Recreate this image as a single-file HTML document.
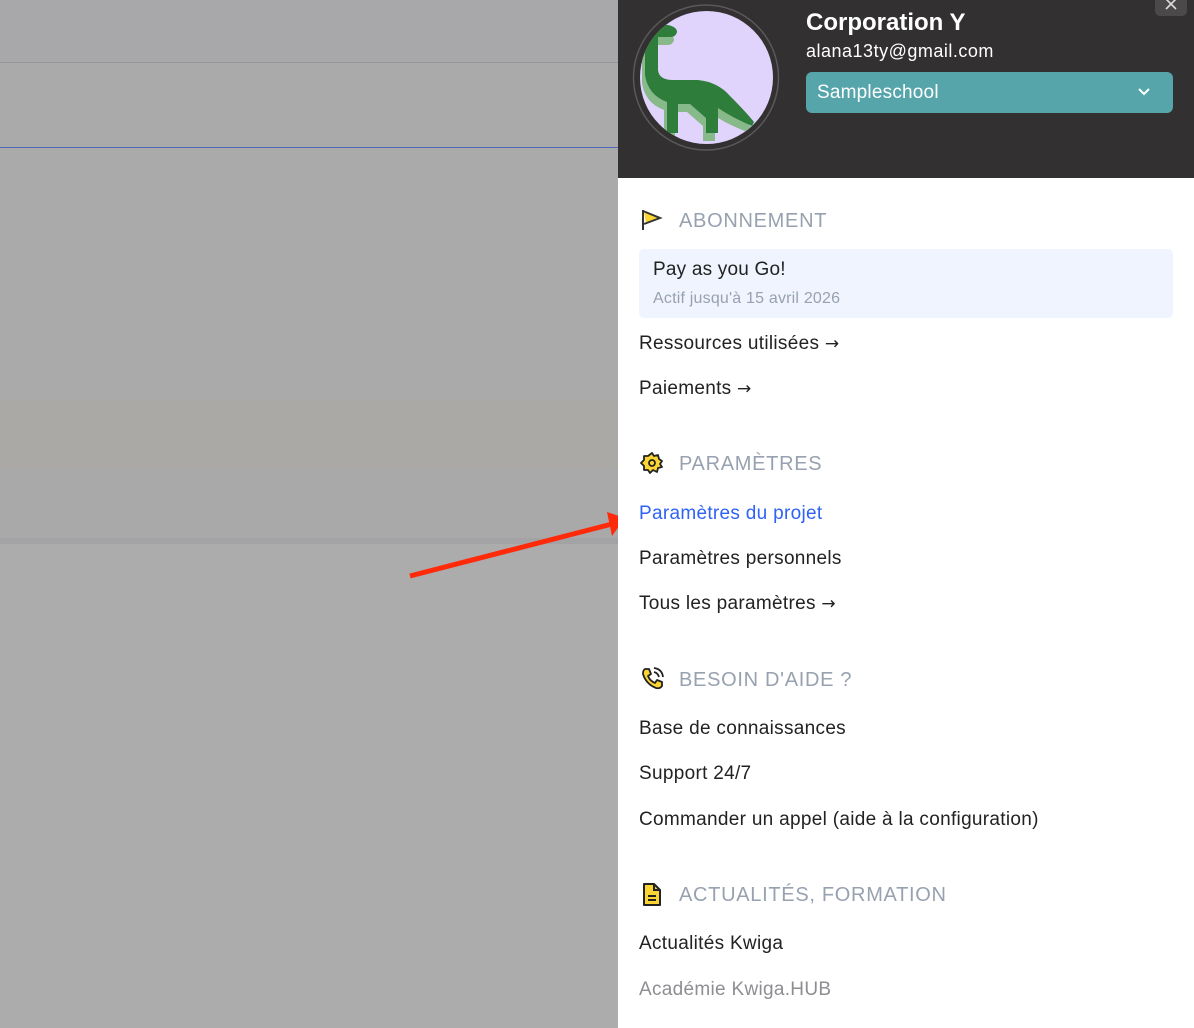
<!DOCTYPE html>
<html><head><meta charset="utf-8"><style>
*{margin:0;padding:0;box-sizing:border-box}
body{width:1194px;height:1028px;overflow:hidden;background:#aaa;font-family:"Liberation Sans",sans-serif;position:relative}
.abs{position:absolute}
.panel{left:618px;top:0;width:576px;height:1028px;background:#fff}
.hdr{left:0;top:0;width:576px;height:178px;background:#323031}
.t{position:absolute;left:21px;font-size:19px;letter-spacing:.3px;color:#222;white-space:nowrap;margin-top:2px}
.h{position:absolute;left:61px;font-size:20px;color:#98a1b0;letter-spacing:.7px;white-space:nowrap;margin-top:2px}
.ic{position:absolute;left:22px}
.ar{font-family:"DejaVu Sans",sans-serif;font-size:17px}
</style></head><body>
<div class="abs" style="left:0;top:0;width:618px;height:62px;background:#a8a8aa"></div>
<div class="abs" style="left:0;top:62px;width:618px;height:1px;background:#959599"></div>
<div class="abs" style="left:0;top:147px;width:618px;height:1px;background:#5068b8"></div>
<div class="abs" style="left:0;top:400px;width:618px;height:68px;background:#aaa9a5"></div>
<div class="abs" style="left:0;top:468px;width:618px;height:70px;background:#a9a9a9"></div>
<div class="abs" style="left:0;top:538px;width:618px;height:6px;background:#a3a3a5"></div>
<div class="abs" style="left:0;top:544px;width:618px;height:484px;background:#acacac"></div>
<svg class="abs" style="left:0;top:0" width="640" height="600"><line x1="410" y1="576" x2="612" y2="524" stroke="#ff2a0a" stroke-width="5"/><polygon points="625,518 607,512 612,536" fill="#ff2a0a"/></svg>
<div class="abs panel">
<div class="abs hdr">
<svg class="abs" style="left:0;top:0" width="180" height="178">
<defs><clipPath id="c"><circle cx="88.5" cy="77.5" r="66.5"/></clipPath></defs>
<circle cx="88" cy="77.5" r="72.5" fill="none" stroke="#5a585a" stroke-width="1.5"/>
<circle cx="88.5" cy="77.5" r="66.5" fill="#e0d4fc"/>
<g clip-path="url(#c)">
<path transform="translate(-3,8)" d="M32 25 L50 25 Q59 27 59 32 Q58 37 52 37 L40 37 L40 70 Q41 80 55 80 L80 80 Q100 82 112 96 Q128 112 140 122 L138 126 Q115 118 100 108 L100 133 L88 133 L88 118 L72 104 L60 104 L60 133 L49 133 L49 102 Q30 95 27 75 L27 35 Q28 25 32 25Z" fill="#87b98a"/>
<path d="M32 25 L50 25 Q59 27 59 32 Q58 37 52 37 L40 37 L40 70 Q41 80 55 80 L80 80 Q100 82 112 96 Q128 112 136 122 L134 126 Q115 118 100 108 L100 133 L88 133 L88 118 L72 104 L60 104 L60 133 L49 133 L49 102 Q30 95 27 75 L27 35 Q28 25 32 25Z" fill="#2e7d3b"/>
</g></svg>
<div class="abs" style="left:188px;top:9px;font-size:24px;font-weight:bold;color:#fff">Corporation Y</div>
<div class="abs" style="left:188px;top:41px;font-size:18px;letter-spacing:.5px;color:#fff">alana13ty@gmail.com</div>
<div class="abs" style="left:188px;top:72px;width:367px;height:41px;background:#55a5aa;border-radius:6px">
<div class="abs" style="left:11px;top:10px;font-size:19px;letter-spacing:.2px;color:#fff">Sampleschool</div>
<svg class="abs" style="left:330px;top:12px" width="16" height="16"><path d="M3 5 L8 10 L13 5" fill="none" stroke="#fff" stroke-width="2"/></svg>
</div>
<div class="abs" style="left:537px;top:-6px;width:32px;height:22px;background:#4b494a;border-radius:5px">
<svg class="abs" style="left:10px;top:5px" width="14" height="12"><path d="M1 0 L11 10 M11 0 L1 10" stroke="#ddd" stroke-width="1.6"/></svg></div>
</div>
<svg class="ic" style="top:207px" width="24" height="24"><path d="M4 4 L20 11 L6 17Z" fill="#fcd535"/><path d="M3 3 L3 23 M3 4 L20 11 L4 17" fill="none" stroke="#333" stroke-width="2"/></svg>
<div class="h" style="top:208px">ABONNEMENT</div>
<div class="abs" style="left:21px;top:249px;width:534px;height:69px;background:#eff4fe;border-radius:5px">
<div class="abs" style="left:14px;top:10px;font-size:19px;letter-spacing:.2px;color:#222">Pay as you Go!</div>
<div class="abs" style="left:14px;top:41px;font-size:16px;letter-spacing:.2px;color:#98a1b0">Actif jusqu'à 15 avril 2026</div></div>
<div class="t" style="top:331px">Ressources utilisées <span class="ar">→</span></div>
<div class="t" style="top:376px">Paiements <span class="ar">→</span></div>
<svg class="ic" style="top:451px" width="24" height="24"><path d="M12 2 L14 5 L18 4 L19 8 L22 10 L20 13 L22 16 L18 17 L17 21 L13 19 L10 22 L8 19 L4 19 L4 15 L1 12 L4 9 L4 5 L8 5Z" fill="#fcd535" stroke="#222" stroke-width="1.8" stroke-linejoin="round"/><circle cx="12" cy="12" r="3" fill="none" stroke="#222" stroke-width="1.8"/></svg>
<div class="h" style="top:451px">PARAMÈTRES</div>
<div class="t" style="top:501px;color:#2f62f5">Paramètres du projet</div>
<div class="t" style="top:546px">Paramètres personnels</div>
<div class="t" style="top:591px">Tous les paramètres <span class="ar">→</span></div>
<svg class="ic" style="top:666px" width="26" height="26"><path d="M5 3 L9 3 L11 8 L8 10 Q10 15 15 17 L17 14 L22 16 L22 20 Q20 23 16 22 Q6 18 3 8 Q3 4 5 3Z" fill="#fcd535" stroke="#222" stroke-width="1.8" stroke-linejoin="round"/><path d="M14 6 Q18 7 19 11 M14 2 Q22 3 23 11" fill="none" stroke="#222" stroke-width="1.8"/></svg>
<div class="h" style="top:667px">BESOIN D'AIDE ?</div>
<div class="t" style="top:716px">Base de connaissances</div>
<div class="t" style="top:761px">Support 24/7</div>
<div class="t" style="top:807px">Commander un appel (aide à la configuration)</div>
<svg class="ic" style="top:881px" width="24" height="26"><path d="M4 3 L14 3 L20 9 L20 24 L4 24Z" fill="#fcd535" stroke="#222" stroke-width="2" stroke-linejoin="round"/><path d="M14 3 L14 9 L20 9 M8 15 L16 15 M8 19 L16 19" fill="none" stroke="#222" stroke-width="2"/></svg>
<div class="h" style="top:882px">ACTUALITÉS, FORMATION</div>
<div class="t" style="top:931px">Actualités Kwiga</div>
<div class="t" style="top:977px;color:#8e8e92">Académie Kwiga.HUB</div>
</div>
</body></html>
